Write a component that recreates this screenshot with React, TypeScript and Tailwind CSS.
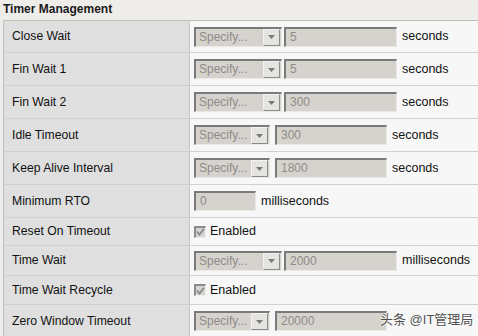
import React from "react";

const font = { fontFamily: '"Liberation Sans", Arial, "Noto Sans CJK SC", sans-serif' };

function Select({ w }: { w: number }) {
  return (
    <div
      className={`flex h-[20px] shrink-0 border-t-2 border-l-2 border-t-[#7a7a7a] border-l-[#7a7a7a] border-r border-b border-r-[#ebe9e6] border-b-[#ebe9e6] bg-[#d6d3ce] ${
        w === 88 ? "w-[88px]" : "w-[76px]"
      }`}
    >
      <span className="flex-1 pl-[3px] text-[12px] leading-[17px] text-[#8e8c88]">Specify...</span>
      <div className="mr-[1px] flex h-[17px] w-[17px] items-center justify-center border border-t-[#f4f3f1] border-l-[#f4f3f1] border-r-[#8a8a8a] border-b-[#8a8a8a] bg-[#e6e4e0]">
        <svg width="7" height="4" viewBox="0 0 7 4">
          <path d="M0 0 H7 L3.5 4 Z" fill="#7a7a7a" />
        </svg>
      </div>
    </div>
  );
}

function Input({ value, w }: { value: string; w: string }) {
  return (
    <div
      className={`h-[20px] shrink-0 border-t-2 border-l-2 border-t-[#7a7a7a] border-l-[#7a7a7a] border-r border-b border-r-[#ebe9e6] border-b-[#ebe9e6] bg-[#d6d3ce] pl-[4px] text-[12px] leading-[17px] text-[#8e8c88] ${w}`}
    >
      {value}
    </div>
  );
}

function Check() {
  return (
    <div className="flex items-center">
      <div className="flex h-[12px] w-[12px] items-center justify-center border-t-2 border-l-2 border-t-[#8a8a8a] border-l-[#8a8a8a] border-r border-b border-r-[#eeeeee] border-b-[#eeeeee] bg-[#d6d3ce]">
        <svg width="9" height="8" viewBox="0 0 9 8">
          <path d="M1 3.5 L3.5 6.5 L8 0.8" stroke="#8a8a8a" strokeWidth="1.8" fill="none" />
        </svg>
      </div>
      <span className="ml-[4px] text-[12.5px] text-[#111]">Enabled</span>
    </div>
  );
}

type Row = { label: string; h: string; content: React.ReactNode };

export default function App() {
  const rows: Row[] = [
    {
      label: "Close Wait",
      h: "h-[32px]",
      content: (
        <>
          <Select w={88} />
          <div className="ml-[2px]"><Input value="5" w="w-[113px]" /></div>
          <span className="ml-[5px]">seconds</span>
        </>
      ),
    },
    {
      label: "Fin Wait 1",
      h: "h-[33px]",
      content: (
        <>
          <Select w={88} />
          <div className="ml-[2px]"><Input value="5" w="w-[113px]" /></div>
          <span className="ml-[5px]">seconds</span>
        </>
      ),
    },
    {
      label: "Fin Wait 2",
      h: "h-[33px]",
      content: (
        <>
          <Select w={88} />
          <div className="ml-[2px]"><Input value="300" w="w-[113px]" /></div>
          <span className="ml-[5px]">seconds</span>
        </>
      ),
    },
    {
      label: "Idle Timeout",
      h: "h-[33px]",
      content: (
        <>
          <Select w={76} />
          <div className="ml-[5px]"><Input value="300" w="w-[112px]" /></div>
          <span className="ml-[5px]">seconds</span>
        </>
      ),
    },
    {
      label: "Keep Alive Interval",
      h: "h-[33px]",
      content: (
        <>
          <Select w={76} />
          <div className="ml-[5px]"><Input value="1800" w="w-[112px]" /></div>
          <span className="ml-[5px]">seconds</span>
        </>
      ),
    },
    {
      label: "Minimum RTO",
      h: "h-[33px]",
      content: (
        <>
          <Input value="0" w="w-[62px]" />
          <span className="ml-[5px]">milliseconds</span>
        </>
      ),
    },
    { label: "Reset On Timeout", h: "h-[28px]", content: <Check /> },
    {
      label: "Time Wait",
      h: "h-[30px]",
      content: (
        <>
          <Select w={88} />
          <div className="ml-[2px]"><Input value="2000" w="w-[113px]" /></div>
          <span className="ml-[5px]">milliseconds</span>
        </>
      ),
    },
    { label: "Time Wait Recycle", h: "h-[29px]", content: <Check /> },
    {
      label: "Zero Window Timeout",
      h: "h-[33px]",
      content: (
        <>
          <Select w={76} />
          <div className="ml-[5px]"><Input value="20000" w="w-[112px]" /></div>
        </>
      ),
    },
  ];

  return (
    <div className="relative h-[336px] w-[478px] overflow-hidden bg-[#efedea] text-[12px] text-[#111]" style={font}>
      <div className="h-[20px] pl-[3px] pt-[2px] text-[12px] font-bold leading-[14px] text-[#1a1a1a]">
        Timer Management
      </div>
      <div className="ml-[3px] border-t border-l border-[#bdbdbd]">
        {rows.map((r) => (
          <div key={r.label} className={`flex border-b border-[#d0d0d0] ${r.h}`}>
            <div className="flex w-[186px] shrink-0 items-center border-r border-[#c4c4c4] bg-[#dfdfdf] pl-[8px] text-[12.2px]">
              {r.label}
            </div>
            <div className="flex flex-1 items-center bg-[#f7f7f7] pl-[4px] text-[12.5px]">{r.content}</div>
          </div>
        ))}
      </div>
      <div
        className="absolute left-[380px] top-[312px] whitespace-nowrap text-[13px] leading-[16px] text-[#505050]"
        style={{ textShadow: "0 0 2px #fff, 0 0 2px #fff" }}
      >
        头条 @IT管理局
      </div>
    </div>
  );
}
